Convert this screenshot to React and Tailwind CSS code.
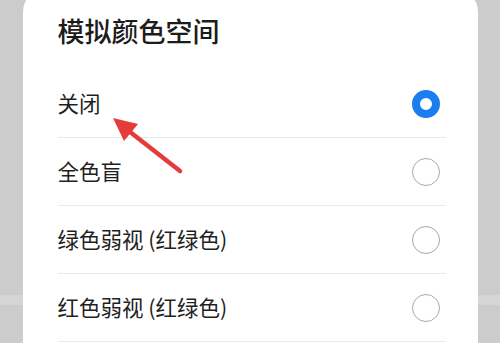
import React, { useState } from "react";

const options = ["关闭", "全色盲", "绿色弱视 (红绿色)", "红色弱视 (红绿色)"];

const Radio = ({ checked }) =>
  checked ? (
    <span className="w-[28px] h-[28px] rounded-full border-[8px] border-[#1a7ef0] bg-white mr-[6px]" />
  ) : (
    <span className="w-[28px] h-[28px] rounded-full border-[1.5px] border-[#a9a9a9] bg-white mr-[6px]" />
  );

const App = () => {
  const [selected, setSelected] = useState(0);

  return (
    <div
      className="w-[500px] h-[343px] overflow-hidden relative flex justify-center bg-[linear-gradient(to_bottom,#cccccc_0,#cccccc_295px,#d5d5d5_295px,#d5d5d5_305px,#cccccc_305px)]"
      style={{ fontFamily: '"Noto Sans CJK SC", "Noto Sans", sans-serif' }}
    >
      <div className="w-[455px] mt-[-12px] bg-white rounded-t-[24px] pt-[25px] pl-[35px] pr-[32px]">
        <h2 className="text-[27px] leading-[36px] font-medium text-[#1c1c1c] mb-[21px]">模拟颜色空间</h2>
        {options.map((label, i) => (
          <div
            key={label}
            onClick={() => setSelected(i)}
            className="h-[68px] flex items-center justify-between border-b border-[#e9e9e9] cursor-pointer"
          >
            <span className="text-[21.5px] text-[#1f1f1f]">{label}</span>
            <Radio checked={selected === i} />
          </div>
        ))}
      </div>

      {/* annotation arrow */}
      <svg className="absolute left-0 top-0 pointer-events-none" width="500" height="343">
        <line x1="180" y1="171" x2="125" y2="128" stroke="#e53b3b" strokeWidth="4.5" strokeLinecap="round" />
        <polygon points="113,118 138,124 124,141" fill="#e53b3b" />
      </svg>
    </div>
  );
};

export default App;
